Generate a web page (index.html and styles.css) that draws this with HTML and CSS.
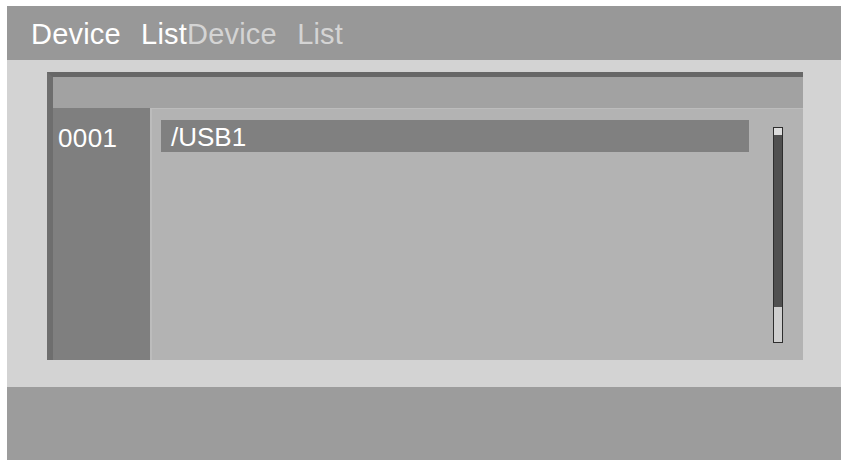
FILE: index.html
```html
<!DOCTYPE html>
<html>
<head>
<meta charset="utf-8">
<link rel="stylesheet" href="styles.css">
</head>
<body>
<div class="frame">
  <div class="header"><span class="title">Device List</span><span class="ghost">Device List</span></div>
  <div class="middle">
    <div class="panel">
      <div class="band"></div>
      <div class="body">
        <div class="index">0001</div>
        <div class="content">
          <div class="row">/USB1</div>
          <div class="scrollbar">
            <div class="cap"></div>
            <div class="track"></div>
            <div class="thumb"></div>
          </div>
        </div>
      </div>
    </div>
  </div>
  <div class="footer"></div>
</div>
</body>
</html>
```
FILE: styles.css
```css
html, body {
  margin: 0;
  padding: 0;
  background: #ffffff;
  overflow: hidden;
}
body {
  font-family: "Liberation Sans", Arial, sans-serif;
}
.frame {
  margin: 6px 0 0 7px;
  width: 834px;
}
.header {
  height: 54px;
  box-sizing: border-box;
  padding: 3px 0 0 24px;
  line-height: 51px;
  background: #989898;
  font-size: 29px;
  letter-spacing: 0.2px;
  white-space: pre;
  word-spacing: 12px;
}
.title {
  color: #ffffff;
}
.ghost {
  color: #d4d4d4;
  word-spacing: 12px;
}
.middle {
  height: 327px;
  box-sizing: border-box;
  padding: 12px 0 0 40px;
  background: #d3d3d3;
}
.panel {
  width: 756px;
  height: 288px;
  box-sizing: border-box;
  border-top: 5px solid #676767;
  border-left: 6px solid #6e6e6e;
  display: flex;
  flex-direction: column;
}
.band {
  height: 31px;
  background: #a2a2a2;
}
.body {
  flex: 1;
  display: flex;
}
.index {
  width: 97px;
  background: #7f7f7f;
  color: #ffffff;
  font-size: 26px;
  letter-spacing: 0.4px;
  line-height: 30px;
  padding: 15px 0 0 5px;
  box-sizing: border-box;
}
.content {
  flex: 1;
  background: #b3b3b3;
  box-shadow: inset 2px 1px 0 #bcbcbc;
  display: flex;
  align-items: flex-start;
}
.row {
  margin: 12px 0 0 11px;
  width: 588px;
  height: 32px;
  box-sizing: border-box;
  padding: 3px 0 0 10px;
  line-height: 29px;
  background: #808080;
  color: #ffffff;
  font-size: 26px;
}
.scrollbar {
  margin: 19px 0 0 24px;
  width: 10px;
  height: 216px;
  box-sizing: border-box;
  border: 1px solid #2e2e2e;
  display: flex;
  flex-direction: column;
}
.cap {
  height: 7px;
  background: #dcdcdc;
}
.track {
  flex: 1;
  background: #505050;
}
.thumb {
  height: 35px;
  background: #cfcfcf;
}
.footer {
  height: 80px;
  background: #9c9c9c;
}
```
